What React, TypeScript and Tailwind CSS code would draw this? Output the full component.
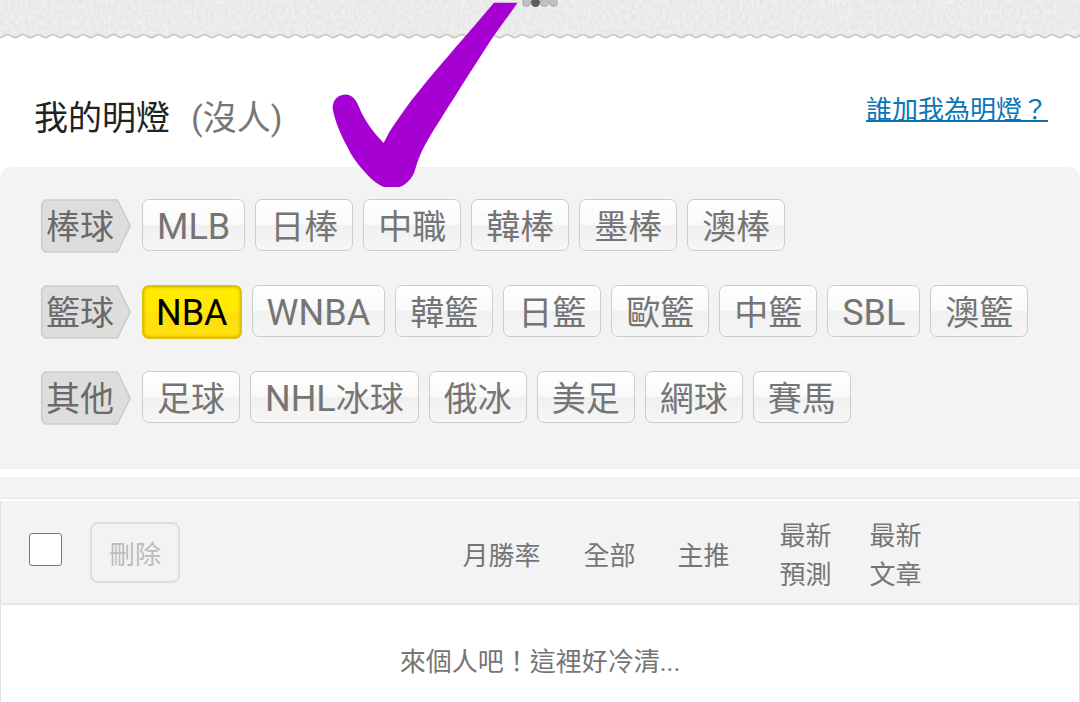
import React from "react";

interface SportGroup {
  name: string;
  leagues: string[];
}

const GROUPS: SportGroup[] = [
  { name: "棒球", leagues: ["MLB", "日棒", "中職", "韓棒", "墨棒", "澳棒"] },
  {
    name: "籃球",
    leagues: ["NBA", "WNBA", "韓籃", "日籃", "歐籃", "中籃", "SBL", "澳籃"],
  },
  { name: "其他", leagues: ["足球", "NHL冰球", "俄冰", "美足", "網球", "賽馬"] },
];

const ACTIVE_LEAGUE = "NBA";

const DOTS = [false, true, false, false];

const TopBanner: React.FC = () => (
  <header className="relative h-10">
    <svg className="block h-10 w-full" aria-hidden="true">
      <defs>
        <filter
          id="paper"
          x="0"
          y="0"
          width="100%"
          height="100%"
          colorInterpolationFilters="sRGB"
        >
          <feTurbulence type="fractalNoise" baseFrequency="0.35 0.2" numOctaves="2" seed="4" />
          <feColorMatrix
            type="matrix"
            values="0.08 0 0 0 0.882  0.08 0 0 0 0.882  0.08 0 0 0 0.882  0 0 0 0 1"
          />
        </filter>
        <pattern id="wave" width="15.14" height="40" patternUnits="userSpaceOnUse">
          <path
            d="M0 40V37.6C3.8 37.6 4 34.6 7.57 34.6S11.4 37.6 15.14 37.6V40Z"
            fill="#ffffff"
          />
          <path
            d="M-1 37.6H0C3.8 37.6 4 34.6 7.57 34.6S11.4 37.6 15.14 37.6H16"
            fill="none"
            stroke="#c8c8c8"
            strokeWidth="1.8"
          />
        </pattern>
      </defs>
      <rect width="100%" height="38" filter="url(#paper)" />
      <rect width="100%" height="40" fill="url(#wave)" />
    </svg>
    <div className="absolute -top-0.5 left-1/2 flex -translate-x-[18px]">
      {DOTS.map((active, index) => (
        <span
          key={index}
          className={
            active
              ? "size-[9px] rounded-full bg-[#5c5c5c]"
              : "size-[9px] rounded-full border border-[#a9a9a9] bg-[#c1c1c1]"
          }
        />
      ))}
    </div>
    <svg
      className="pointer-events-none absolute top-0 left-[320px] z-10 h-[190px] w-[200px]"
      viewBox="0 0 200 190"
      aria-hidden="true"
    >
      <path
        d="M174 2.7H197.5C188 17 179 28 171 40C160 57 149 74 139 90C127 109 114 129 105 145C99 156 97 164 94 173C91 180 84 186 79 187H64C56 184 49 177 43 170C37 163 32 157 28 148C21 136 15 121 12.7 109C12.3 101 17 95 25 94.6C33 95 36 100 39 107C43 117 50 128 59 138C62 141 62.5 142 63.5 143C65 141 67 136 70 131C78 119 88 104 99 91C110 77 123 62 135 48C149 32 162 17 174 2.7Z"
        fill="#a600d2"
      />
    </svg>
  </header>
);

const GroupLabel: React.FC<{ name: string }> = ({ name }) => (
  <div className="relative mr-[11px] h-[54px] w-[91px] shrink-0">
    <svg className="absolute inset-0" width="91" height="54" viewBox="0 0 91 54" aria-hidden="true">
      <path
        d="M5 1H77.5L90.2 27L77.5 53H5L1.7 49V5Z"
        fill="#dddddd"
        stroke="#cbcbcb"
        strokeWidth="1.5"
        strokeLinejoin="round"
      />
    </svg>
    <span className="relative block pl-1.5 leading-[56px] text-[#6a6a6a]">{name}</span>
  </div>
);

const LeagueButton: React.FC<{ name: string }> = ({ name }) => {
  const active = name === ACTIVE_LEAGUE;
  // latin letters run slightly larger than the Chinese ones
  const [latin] = name.match(/^[A-Z]+/) ?? [""];
  return (
    <button
      type="button"
      aria-pressed={active}
      className={
        active
          ? "h-[54px] rounded-[7px] border-2 border-[#dcc30a] bg-linear-to-b from-[#ffea00] from-50% to-[#ffdf0c] to-50% px-3 pt-0.5 leading-[48px] text-black shadow-[inset_0_0_3px_#c9ab00]"
          : "h-[52px] rounded-[7px] border border-[#cccccc] bg-[linear-gradient(#ffffff,#f9f9f9_50%,#f0f0f0_50%,#f6f6f6)] px-3.5 pt-1 leading-[46px] text-[#757575]"
      }
    >
      {latin && <span className="text-[36px]">{latin}</span>}
      {name.slice(latin.length)}
    </button>
  );
};

const App: React.FC = () => {
  return (
    <div
      lang="zh-Hant"
      className="min-h-screen bg-white font-[Roboto,'Noto_Sans_CJK_TC',sans-serif] text-[#757575]"
    >
      <TopBanner />

      <div className="flex h-[127px] items-start justify-between pr-8 pl-[34px]">
        <h1 className="flex gap-[21px] pt-[52px] text-[34px] leading-[52px] text-[#222222]">
          我的明燈 <span className="text-[#777777]">(沒人)</span>
        </h1>
        <a
          href="#followers"
          className="pt-[51px] text-[26px] leading-[38px] text-[#0b76b5] underline decoration-2 underline-offset-1 [text-decoration-skip-ink:none]"
        >
          誰加我為明燈？
        </a>
      </div>

      <section className="flex flex-col gap-8 rounded-t-xl bg-[#f3f3f3] px-10 pt-8 pb-11 text-[34px]">
        {GROUPS.map((group) => (
          <div key={group.name} className="flex items-start">
            <GroupLabel name={group.name} />
            <div className="flex flex-wrap gap-2.5">
              {group.leagues.map((league) => (
                <LeagueButton key={league} name={league} />
              ))}
            </div>
          </div>
        ))}
      </section>

      <div className="mt-2 mb-0.5 h-[22px] border-b border-[#e8e8e8] bg-[#f3f3f3]" />

      <table className="w-full table-fixed border-collapse border-x border-[#e0e0e0] text-[26px] leading-[39px]">
        <colgroup>
          <col />
          <col className="w-[108px]" />
          <col className="w-[108px]" />
          <col className="w-[80px]" />
          <col className="w-[124px]" />
          <col className="w-[56px]" />
          <col className="w-[156px]" />
        </colgroup>
        <thead>
          <tr className="h-[103px] border-b-2 border-[#e6e6e6] bg-[#f3f3f3] whitespace-nowrap">
            <th className="p-0 text-left font-normal">
              <div className="flex items-center gap-7 pl-7">
                <input
                  type="checkbox"
                  aria-label="全選"
                  className="mb-1.5 size-[33px] appearance-none rounded-[3px] border border-[#767676] bg-white"
                />
                <button
                  type="button"
                  disabled
                  className="h-[61px] w-[90px] rounded-lg border-2 border-[#dedede] pt-1.5 text-center text-[#bbbbbb]"
                >
                  刪除
                </button>
              </div>
            </th>
            <th className="p-0 pt-2 font-normal">月勝率</th>
            <th className="p-0 pt-2 font-normal">全部</th>
            <th className="p-0 pt-2 font-normal">主推</th>
            <th className="p-0 pt-2 font-normal">
              最新
              <br />
              預測
            </th>
            <th className="p-0 pt-2 font-normal">
              最新
              <br />
              文章
            </th>
            <td />
          </tr>
        </thead>
        <tbody>
          <tr>
            <td colSpan={7} className="pt-[38px] pb-5 text-center">
              來個人吧！這裡好冷清...
            </td>
          </tr>
        </tbody>
      </table>
    </div>
  );
};

export default App;
